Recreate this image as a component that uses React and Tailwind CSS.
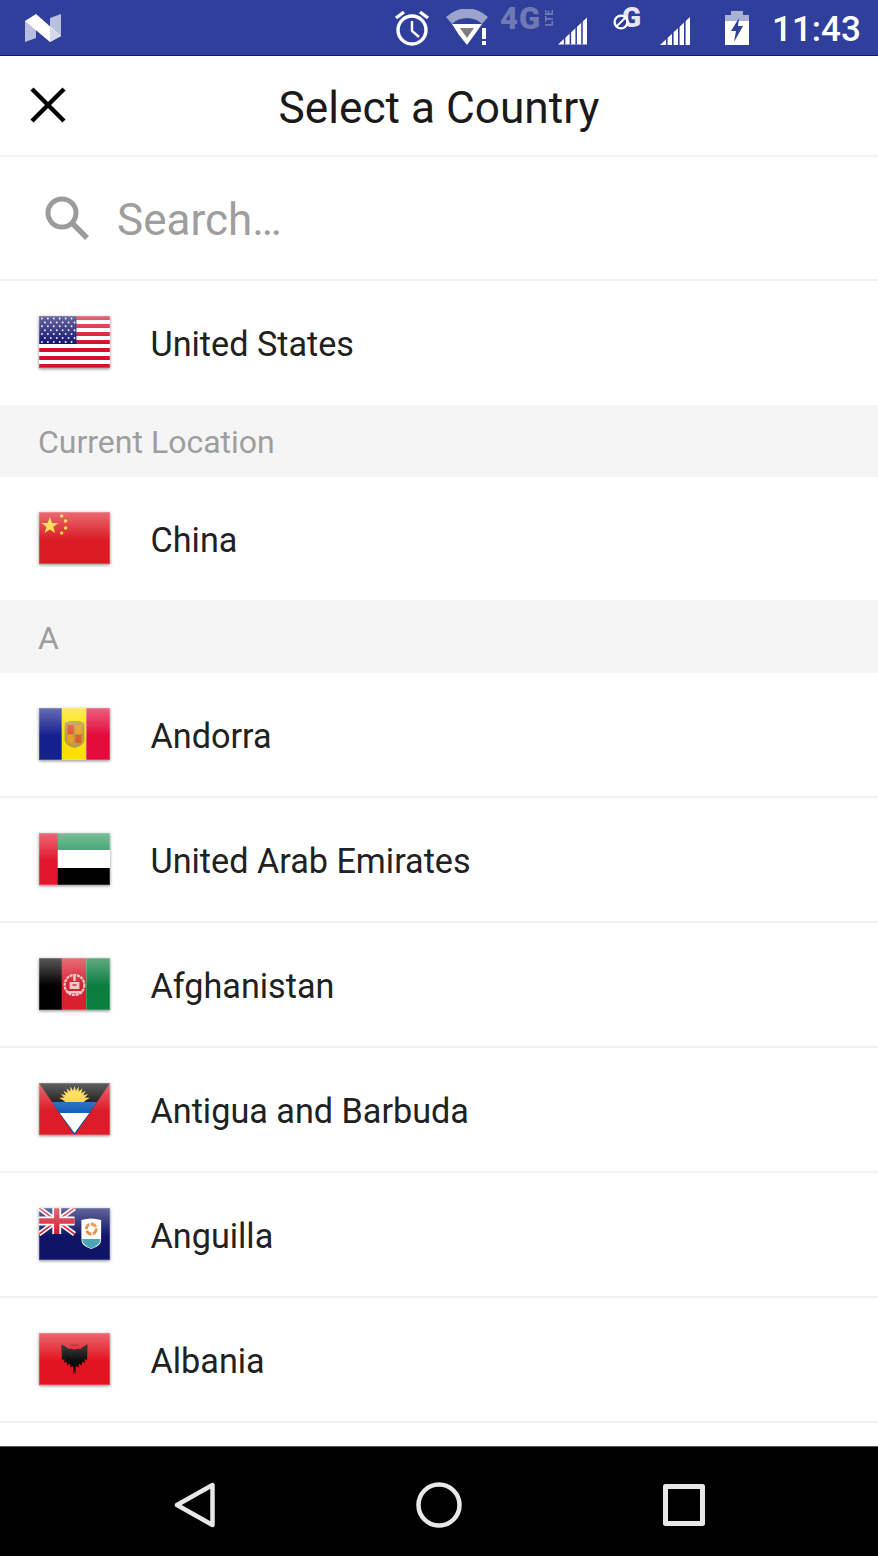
import React from "react";

const Flag = ({ children }) => (
  <div className="relative h-[52px] w-[71px] shrink-0 overflow-hidden shadow-[0_1px_3px_rgba(0,0,0,0.45)]">
    <svg viewBox="0 0 72 52" preserveAspectRatio="none" className="block h-full w-full blur-[0.5px]">
      {children}
    </svg>
    <div className="absolute inset-x-0 top-0 h-[28px] bg-gradient-to-b from-white/35 to-transparent" />
    <div className="absolute inset-0 border border-white/20" />
  </div>
);

const UsFlag = () => (
  <Flag>
    <rect width="72" height="52" fill="#fff" />
    {[0, 1, 2, 3, 4, 5, 6].map((i) => (
      <rect key={i} y={i * 8} width="72" height="4" fill="#d5102c" />
    ))}
    <rect width="38" height="28" fill="#14146e" />
    {[0, 1, 2, 3, 4, 5, 6].map((r) =>
      [0, 1, 2, 3, 4, 5].map((c) => (
        <circle key={`${r}-${c}`} cx={3 + c * 6 + (r % 2) * 3} cy={2.5 + r * 3.9} r="1" fill="#e8e8f5" />
      ))
    )}
  </Flag>
);

const CnFlag = () => (
  <Flag>
    <rect width="72" height="52" fill="#dc1c24" />
    <polygon points="10,5 12.2,11 18.5,11 13.5,15 15.4,21 10,17.4 4.6,21 6.5,15 1.5,11 7.8,11" transform="translate(1 0)" fill="#ffd83a" />
    <circle cx="23" cy="4" r="1.7" fill="#ffd83a" />
    <circle cx="27" cy="9" r="1.7" fill="#ffd83a" />
    <circle cx="27" cy="16" r="1.7" fill="#ffd83a" />
    <circle cx="23" cy="21" r="1.7" fill="#ffd83a" />
  </Flag>
);

const AdFlag = () => (
  <Flag>
    <rect width="24" height="52" fill="#14208c" />
    <rect x="23" width="25" height="52" fill="#fee000" />
    <rect x="48" width="24" height="52" fill="#e20b3c" />
    <path d="M26 15l5-2h10l5 2v17q0 5-10 8q-10-3-10-8z" fill="#b99a4e" />
    <rect x="29" y="17" width="6" height="9" fill="#e9532b" />
    <rect x="37" y="17" width="6" height="9" fill="#e8a020" />
    <rect x="29" y="27" width="6" height="8" fill="#e8a020" />
    <rect x="37" y="27" width="6" height="8" fill="#d8642a" />
  </Flag>
);

const AeFlag = () => (
  <Flag>
    <rect width="72" height="17" fill="#2f9a62" />
    <rect y="17" width="72" height="18" fill="#fff" />
    <rect y="35" width="72" height="17" fill="#000" />
    <rect width="19" height="52" fill="#e2162c" />
  </Flag>
);

const AfFlag = () => (
  <Flag>
    <rect width="24" height="52" fill="#000" />
    <rect x="23" width="25" height="52" fill="#d9202f" />
    <rect x="48" width="24" height="52" fill="#0b7d3f" />
    <circle cx="36" cy="27" r="10" fill="none" stroke="#f4c8cc" strokeWidth="2.2" strokeDasharray="3 0.8" />
    <path d="M31 24h10v7h-10z" fill="#f4c8cc" />
    <path d="M36 18v6M34 27h4" stroke="#d9202f" strokeWidth="1.6" />
    <path d="M36 18v5" stroke="#f4c8cc" strokeWidth="2.4" />
    <rect x="28" y="33" width="16" height="2.4" fill="#f4c8cc" />
  </Flag>
);

const AgFlag = () => (
  <Flag>
    <rect width="72" height="52" fill="#dc1c28" />
    <polygon points="0,0 72,0 36,52" fill="#0a0a0a" />
    {[-75, -60, -45, -30, -15, 0, 15, 30, 45, 60, 75].map((a) => (
      <polygon key={a} points="33.6,11 36,3 38.4,11" fill="#fdd835" transform={`rotate(${a} 36 19)`} />
    ))}
    <path d="M26 19a10 10 0 0 1 20 0z" fill="#fdd835" />
    <polygon points="13,19 59,19 36,52" fill="#1662b8" />
    <polygon points="21,30 51,30 36,50" fill="#fff" />
  </Flag>
);

const AiFlag = () => (
  <Flag>
    <rect width="72" height="52" fill="#0f1466" />
    <path d="M0 0l36 26M36 0L0 26" stroke="#fff" strokeWidth="5" />
    <path d="M0 0l36 26M36 0L0 26" stroke="#d0182c" strokeWidth="1.6" />
    <path d="M18 0v26M0 13h36" stroke="#fff" strokeWidth="9" />
    <path d="M18 0v26M0 13h36" stroke="#d0182c" strokeWidth="5.4" />
    <path d="M43 12q10-3 20 0v20q0 6-10 9q-10-3-10-9z" fill="#fff" />
    <path d="M43.6 31h18.8q0 6-9.4 9.4q-9.4-3.4-9.4-9.4z" fill="#4aa6b8" />
    <circle cx="53" cy="21" r="5" fill="none" stroke="#ea8a3c" strokeWidth="2.8" strokeDasharray="6 1.5" />
  </Flag>
);

const AlWing = () => (
  <path d="M35.6 17l-2.6-1.6l-3.4 0.8l1-2.4l2.6-2l2.4 1.4v-1.2l-2.5-0.4l-1.8 1.2l-1.5 2.8l-7-4.6v3l0.5 13l2.4-1v4l2.4-1.4l0.6 4l2.6-2l0.8 4l2.2-1.6l1.2 3.4l1.5 5l0.4-25z" fill="#0c0c0c" />
);

const AlFlag = () => (
  <Flag>
    <rect width="72" height="52" fill="#e2141f" />
    <AlWing />
    <g transform="translate(72 0) scale(-1 1)">
      <AlWing />
    </g>
  </Flag>
);

const countries = [
  { name: "Andorra", flag: <AdFlag /> },
  { name: "United Arab Emirates", flag: <AeFlag /> },
  { name: "Afghanistan", flag: <AfFlag /> },
  { name: "Antigua and Barbuda", flag: <AgFlag /> },
  { name: "Anguilla", flag: <AiFlag /> },
  { name: "Albania", flag: <AlFlag /> },
];

const CountryRow = ({ name, flag, className }) => (
  <div className={`flex items-center gap-[40.5px] pb-[2px] pl-[39px] text-[34.2px] text-[#212121] ${className}`}>
    {flag}
    <span className="pt-[6px]">{name}</span>
  </div>
);

const SectionHeader = ({ title, className }) => (
  <div className={`flex items-center bg-[#f5f5f5] pt-[2px] pl-[38px] text-[32px] text-[#9e9e9e] ${className}`}>
    {title}
  </div>
);

const Signal = ({ className }) => (
  <svg viewBox="0 0 30 28" className={className}>
    <polygon points="30,0 30,28 0,28" fill="#fff" />
    {[6, 12, 18, 24].map((x) => (
      <rect key={x} x={x} y="0" width="1.6" height="28" fill="#303f9b" />
    ))}
  </svg>
);

const StatusBar = () => (
  <div className="flex h-[56px] shrink-0 items-center border-b border-[#14148a] bg-[#303f9b]">
    <svg viewBox="0 0 36 30" className="ml-[25px] h-[30px] w-[36px]">
      <polygon points="0,8 11,4 11,25 0,29" fill="#b9c0de" />
      <polygon points="25,5 36,1 36,23 25,26" fill="#b9c0de" />
      <polygon points="0,8 11,1 36,23 25,29" fill="#fff" />
      <polygon points="25,29 36,23 25,14" fill="#d4d8ea" />
    </svg>
    <svg viewBox="0 0 36 37" fill="none" stroke="#fff" className="ml-[333px] h-[37px] w-[36px]">
      <circle cx="18" cy="21" r="14" strokeWidth="3.4" />
      <path d="M18 12v10l7 6" strokeWidth="2.4" />
      <path d="M2 9l8-6M34 9l-8-6" strokeWidth="3.4" />
    </svg>
    <svg viewBox="0 0 44 37" className="ml-4 h-[37px] w-[44px]">
      <path d="M0 8a30 30 0 0 1 42 0l-6 7a22 22 0 0 0-30 0z" fill="#9aa3cc" />
      <polygon points="6,15 36,15 29,25 21,36 13,26" fill="#fff" />
      <polygon points="14,19 28,19 21,29" fill="#808080" />
      <rect x="36" y="19" width="4" height="11" fill="#fff" />
      <rect x="36" y="32" width="4" height="4" fill="#fff" />
    </svg>
    <div className="relative -top-[9px] ml-[10px] flex w-[55px] items-center justify-between text-[#6f7ab5]">
      <span className="text-[31px] leading-none font-black tracking-[1px]">4G</span>
      <span className="rotate-180 text-[10px] leading-none font-black [writing-mode:vertical-rl]">LTE</span>
    </div>
    <Signal className="relative top-[3px] ml-[3px] h-[28px] w-[29px]" />
    <div className="relative -top-[9px] ml-[26px] h-[23px] w-[28px]">
      <span className="absolute top-[-4px] right-0 text-[28px] leading-[30px] font-black text-[#e6e8f3]">G</span>
      <svg viewBox="0 0 16 16" fill="none" stroke="#fff" className="absolute bottom-0 left-0 h-4 w-4">
        <circle cx="8" cy="8" r="6.4" strokeWidth="2.4" fill="#303f9b" />
        <path d="M3 13L13 3" strokeWidth="1.8" />
      </svg>
    </div>
    <Signal className="relative top-[3px] ml-[19px] h-[28px] w-[30px]" />
    <svg viewBox="0 0 24 34" className="ml-[35px] h-[34px] w-[24px]">
      <rect x="6" y="0" width="12" height="5" fill="#aab1d4" />
      <rect x="0" y="4" width="24" height="8" fill="#aab1d4" />
      <rect x="0" y="10" width="24" height="24" fill="#fff" />
      <polygon points="14,7 6,20 11,20 9,31 18,15 13,15" fill="#303f9b" />
    </svg>
    <span className="ml-[23px] pt-[3px] text-[35px] leading-none font-medium text-white">11:43</span>
  </div>
);

const NavBar = () => (
  <div className="flex h-[110px] shrink-0 items-center justify-center border-t border-[#555] bg-black pt-[7px]">
    <svg viewBox="0 0 42 46" fill="none" stroke="#e8e8e8" strokeWidth="4.5" strokeLinejoin="round" className="h-[46px] w-[42px]">
      <polygon points="3,23 38.5,3 38.5,43" />
    </svg>
    <svg viewBox="0 0 46 46" fill="none" stroke="#e8e8e8" strokeWidth="4.5" className="ml-[200px] h-[46px] w-[46px]">
      <circle cx="23" cy="23" r="20.5" />
    </svg>
    <svg viewBox="0 0 42 42" fill="none" stroke="#e8e8e8" strokeWidth="5" strokeLinejoin="round" className="ml-[201px] h-[42px] w-[42px]">
      <rect x="2.5" y="2.5" width="37" height="37" />
    </svg>
  </div>
);

const App = () => {
  return (
    <div className="flex h-[1556px] w-[878px] flex-col overflow-hidden bg-white font-['Roboto',sans-serif]">
      <StatusBar />

      <div className="relative flex h-[101px] shrink-0 items-center justify-center border-b-2 border-[#f2f2f2] pt-[5px]">
        <svg viewBox="0 0 36 36" className="absolute top-[31px] left-[30px] h-9 w-9" stroke="#000" strokeWidth="4.4">
          <path d="M2 2l32 32M34 2L2 34" />
        </svg>
        <span className="text-[44.2px] text-[#1a1a1a]">Select a Country</span>
      </div>

      <div className="flex h-[124px] shrink-0 items-center border-b-2 border-[#f2f2f2] pl-[45px]">
        <svg viewBox="0 0 44 44" fill="none" stroke="#9b9b9b" className="h-[44px] w-[44px]">
          <circle cx="17" cy="17" r="14" strokeWidth="5" />
          <path d="M27 27l15 15" strokeWidth="5.5" />
        </svg>
        <span className="ml-[28px] pt-[4px] text-[44px] text-[#9e9e9e]">Search…</span>
      </div>

      <CountryRow name="United States" flag={<UsFlag />} className="h-[124px] shrink-0" />
      <SectionHeader title="Current Location" className="h-[72px] shrink-0" />
      <CountryRow name="China" flag={<CnFlag />} className="h-[123px] shrink-0" />
      <SectionHeader title="A" className="h-[73px] shrink-0" />

      <div className="min-h-0 flex-1">
        {countries.map((country) => (
          <CountryRow
            key={country.name}
            name={country.name}
            flag={country.flag}
            className="h-[125px] border-b-2 border-[#f2f2f2]"
          />
        ))}
      </div>

      <NavBar />
    </div>
  );
};

export default App;
